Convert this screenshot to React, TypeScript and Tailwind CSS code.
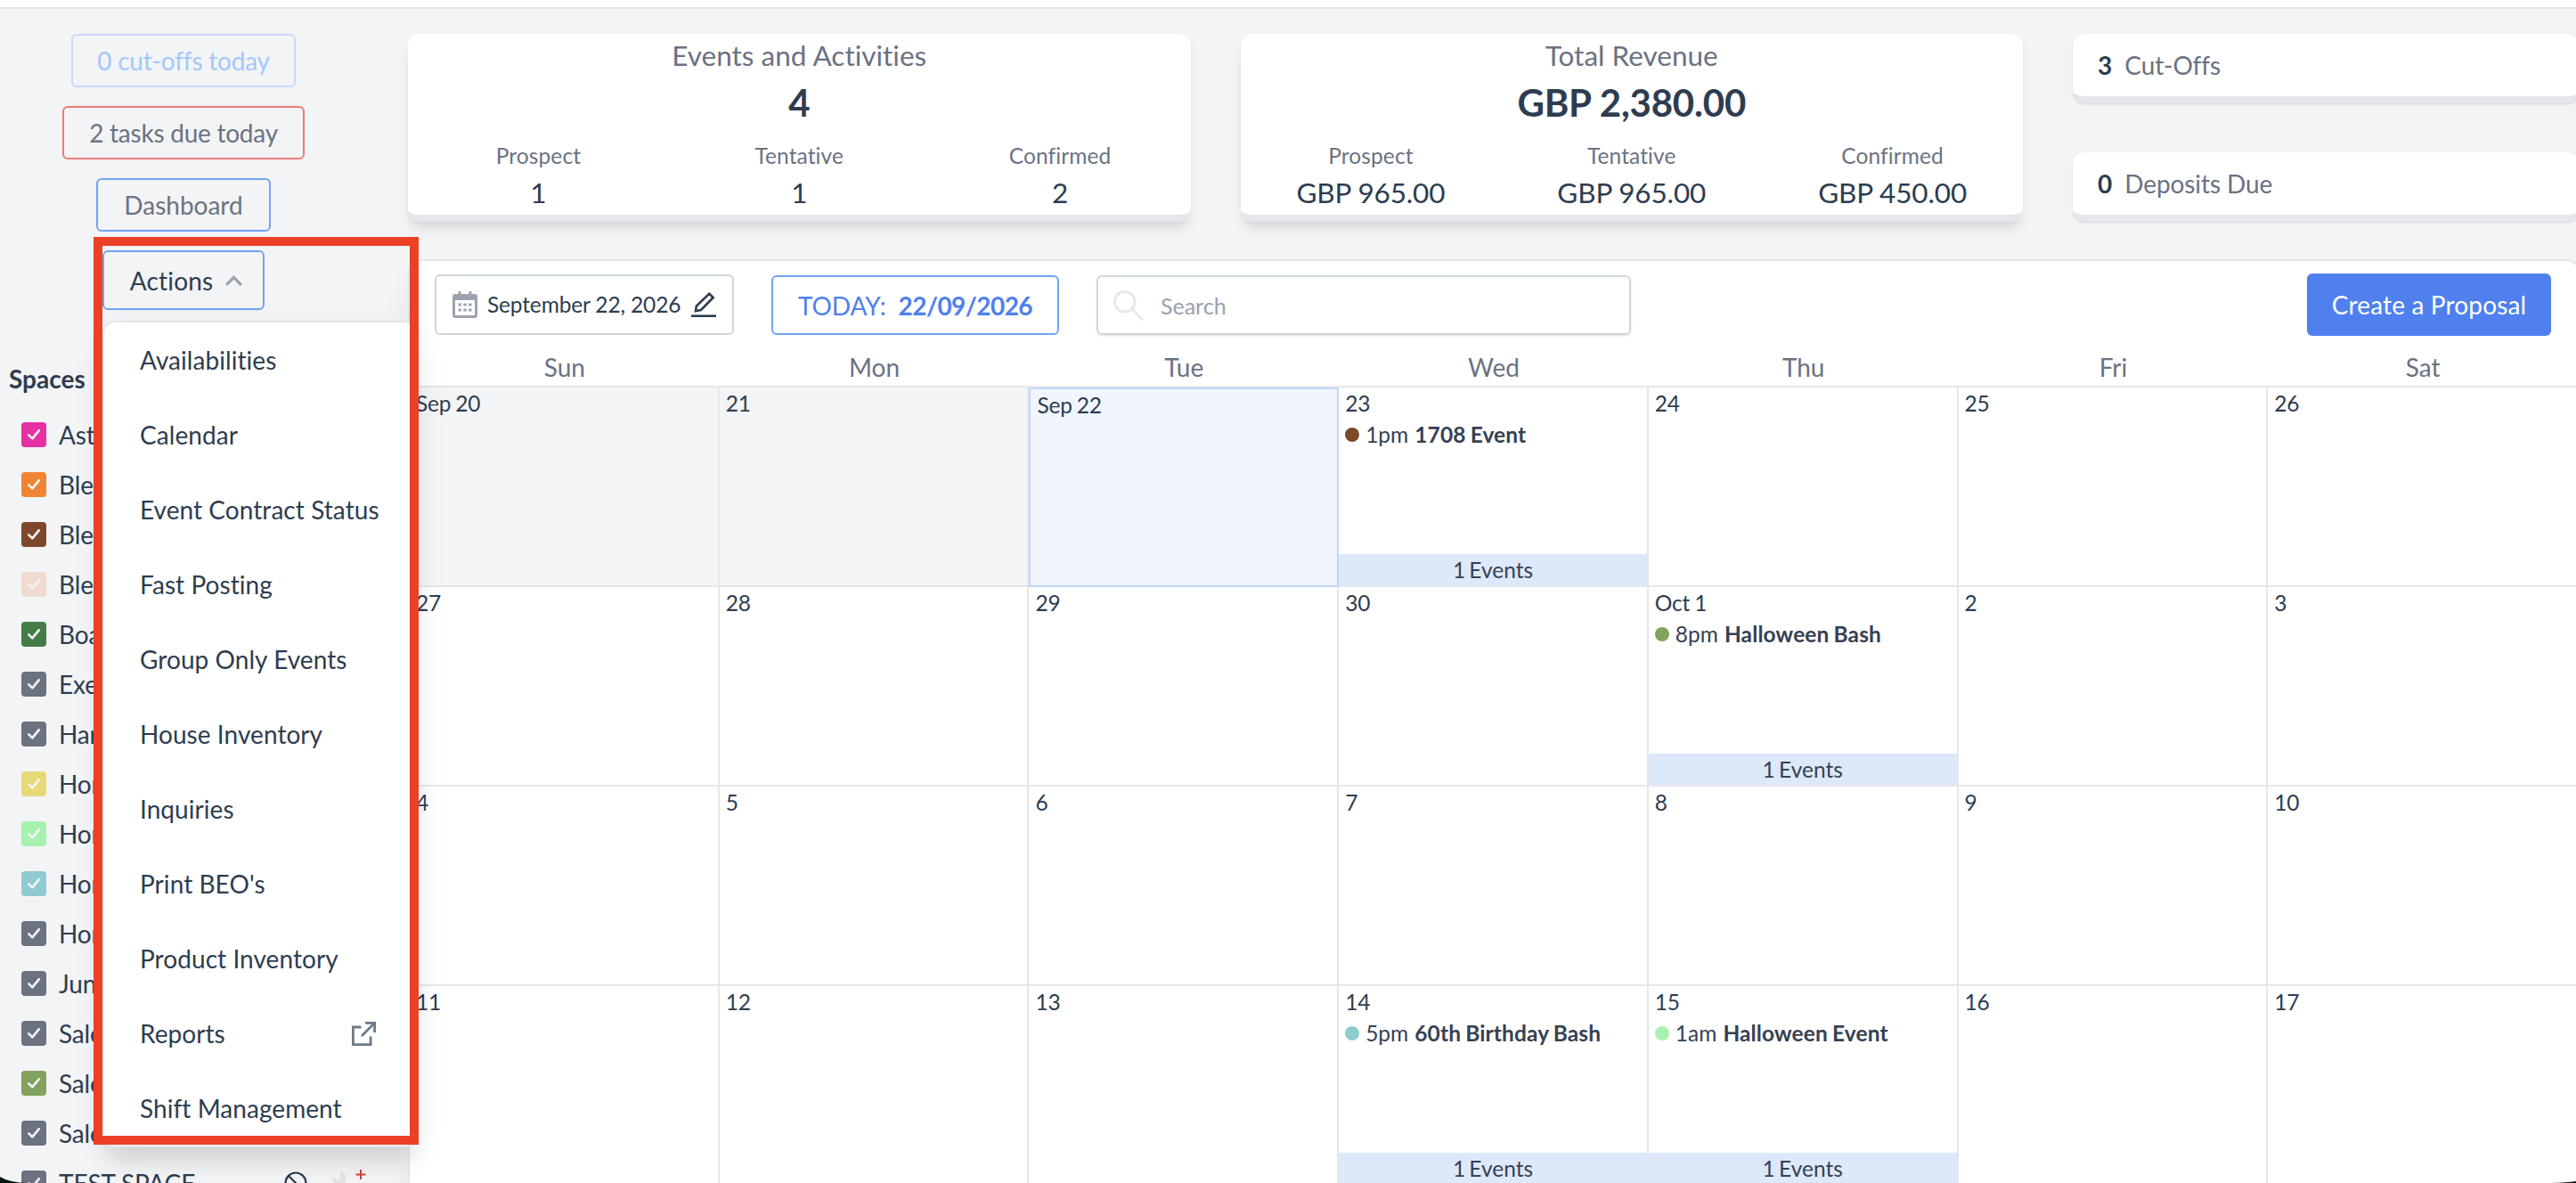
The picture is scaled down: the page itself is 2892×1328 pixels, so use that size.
const BUTTON = "flex items-center justify-center rounded-md border-2"

const SPACES = [
  { name: "Ast", color: "#e52fa2" },
  { name: "Ble", color: "#ef8534" },
  { name: "Ble", color: "#7d482a" },
  { name: "Ble", color: "#f1dad0" },
  { name: "Boa", color: "#437d45" },
  { name: "Exe", color: "#6b7280" },
  { name: "Har", color: "#6b7280" },
  { name: "Hor", color: "#e5da76" },
  { name: "Hor", color: "#a6f2ae" },
  { name: "Hor", color: "#8fcbcf" },
  { name: "Hor", color: "#6b7280" },
  { name: "Jun", color: "#6b7280" },
  { name: "Sale", color: "#6b7280" },
  { name: "Sale", color: "#83a25e" },
  { name: "Sale", color: "#6b7280" },
  { name: "TEST SPACE", color: "#6b7280" },
]

const ACTIONS = [
  "Availabilities",
  "Calendar",
  "Event Contract Status",
  "Fast Posting",
  "Group Only Events",
  "House Inventory",
  "Inquiries",
  "Print BEO's",
  "Product Inventory",
  "Reports",
  "Shift Management",
]

const WEEKDAYS = ["Sun", "Mon", "Tue", "Wed", "Thu", "Fri", "Sat"]

type Day = { label: string; state?: "past" | "today"; event?: { time: string; title: string; color: string } }

const DAYS: Day[] = [
  { label: "Sep 20", state: "past" },
  { label: "21", state: "past" },
  { label: "Sep 22", state: "today" },
  { label: "23", event: { time: "1pm", title: "1708 Event", color: "#7d482a" } },
  { label: "24" },
  { label: "25" },
  { label: "26" },
  { label: "27" },
  { label: "28" },
  { label: "29" },
  { label: "30" },
  { label: "Oct 1", event: { time: "8pm", title: "Halloween Bash", color: "#83a25e" } },
  { label: "2" },
  { label: "3" },
  { label: "4" },
  { label: "5" },
  { label: "6" },
  { label: "7" },
  { label: "8" },
  { label: "9" },
  { label: "10" },
  { label: "11" },
  { label: "12" },
  { label: "13" },
  { label: "14", event: { time: "5pm", title: "60th Birthday Bash", color: "#8fcbcf" } },
  { label: "15", event: { time: "1am", title: "Halloween Event", color: "#a6f2ae" } },
  { label: "16" },
  { label: "17" },
]

function CalendarIcon() {
  return (
    <svg className="w-7 h-[30px] shrink-0" viewBox="0 0 28 30" fill="none">
      <path d="M8 0v6M20 0v6" stroke="#9ca3af" strokeWidth="3" />
      <rect x="1.5" y="4.5" width="25" height="24" rx="1.5" stroke="#9ca3af" strokeWidth="3" />
      <path d="M1 4h26v6H1z" fill="#9ca3af" />
      <path d="M6.5 15h3.4M12.3 15h3.4M18.1 15h3.4M6.5 21h3.4M12.3 21h3.4M18.1 21h3.4" stroke="#9ca3af" strokeWidth="3.2" />
    </svg>
  )
}

function PencilIcon() {
  return (
    <svg className="w-7 h-7 shrink-0" viewBox="0 0 28 28" fill="none" stroke="#2d3d50">
      <path d="M20.2 1.8 24.7 6 11 20l-6 1.2L5.8 15.6z" strokeWidth="2.6" />
      <path d="M0 26.7h28" strokeWidth="2.6" />
    </svg>
  )
}

function ExternalIcon() {
  return (
    <svg className="w-[27px] h-[27px]" viewBox="0 0 27 27" fill="none" stroke="#6c7a86" strokeWidth="2.8">
      <path d="M10.5 6H1.4v19.6h19.7v-9.2" />
      <path d="M15 1.4h10.6V12M25.2 1.8 11 16" />
    </svg>
  )
}

function StatCard({ title, value, items }: { title: string; value: string; items: [string, string][] }) {
  return (
    <section className="w-[878.5px] h-[211px] shrink-0 rounded-[14px] border-b-8 border-[#e5e7eb] bg-white text-center shadow-[0_10px_15px_-3px_rgba(0,0,0,0.1),0_4px_6px_-2px_rgba(0,0,0,0.05)]">
      <h2 className="text-[31.5px] leading-[48px] text-gray-500">{title}</h2>
      <p className="text-[42px] leading-[58px] font-bold tracking-[-0.2px]">{value}</p>
      <div className="mt-3 grid grid-cols-3">
        {items.map(([label, amount]) => (
          <div key={label}>
            <p className="text-[24.5px] leading-[37px] tracking-[0.1px] text-gray-500">{label}</p>
            <p className="text-[31.5px] leading-[46px] tracking-[-0.14px]">{amount}</p>
          </div>
        ))}
      </div>
    </section>
  )
}

function CountCard({ count, label }: { count: number; label: string }) {
  return (
    <section className="flex h-[78px] items-center gap-[14px] rounded-[14px] border-b-8 border-[#e5e7eb] bg-white px-7 shadow-sm">
      <b>{count}</b>
      <span className="tracking-[-0.1px] text-gray-500">{label}</span>
    </section>
  )
}

function DayCell({ day }: { day: Day }) {
  const tone =
    day.state === "today"
      ? "border-2 border-[#bfd7fb] bg-[#f0f5ff]"
      : day.state === "past"
        ? "border-r-2 border-b-2 border-[#e5e7eb] bg-[#f3f4f6]"
        : "border-r-2 border-b-2 border-[#e5e7eb] bg-white"
  return (
    <div className={`flex h-56 flex-col text-[24.5px] ${tone}`}>
      <p className="px-[7px] leading-[35px] tracking-[-0.2px] [word-spacing:-1px]">{day.label}</p>
      {day.event && (
        <>
          <p className="flex items-center px-[7px] leading-[35px] text-gray-700">
            <span className="mr-[7px] size-4 rounded-full" style={{ background: day.event.color }} />
            {day.event.time}
            <b className="ml-[7px] tracking-[0.12px] [word-spacing:-1px]">{day.event.title}</b>
          </p>
          <p className="mt-auto bg-[#dde8fb] text-center leading-[35px] text-gray-700 [word-spacing:-2px]">1 Events</p>
        </>
      )}
    </div>
  )
}

function ActionsMenu() {
  return (
    <div className="relative">
      <button className={`${BUTTON} h-[67px] w-[182px] gap-[14px] border-[#6fa3f7] pl-[6px] tracking-[0.2px]`}>
        Actions
        <svg className="w-[19px] h-[12px]" viewBox="0 0 19 12" fill="none" stroke="#9ca3af" strokeWidth="3.2">
          <path d="m1.2 10.8 8.3-8.5 8.3 8.5" />
        </svg>
      </button>
      <ul className="absolute left-0 top-[79px] w-[353px] rounded-[14px] border-2 border-[#e5e7eb] bg-white tracking-[0.06px] shadow-[0_20px_25px_-5px_rgba(0,0,0,0.1),0_10px_40px_0_rgba(0,0,0,0.06)]">
        {ACTIONS.map((item) => (
          <li key={item} className="flex h-[84px] items-center justify-between pl-[40px] pr-11">
            <span className="whitespace-nowrap">{item}</span>
            {item === "Reports" && <ExternalIcon />}
          </li>
        ))}
      </ul>
      {/* highlight frame around the open menu */}
      <div className="absolute left-[-10px] top-[-15px] h-[1019px] w-[365px] border-10 border-[#ec4027]" />
    </div>
  )
}

function Sidebar() {
  return (
    <aside className="relative z-10 w-[458px] shrink-0 pt-7">
      <div className="flex w-[412px] flex-col items-center gap-[21px]">
        <button className={`${BUTTON} h-[60px] w-[252px] border-[#c3dafb] tracking-[-0.2px] text-[#a3c7fa]`}>0 cut-offs today</button>
        <button className={`${BUTTON} h-[60px] w-[272px] border-[#ec7b78] tracking-[-0.24px] text-gray-500`}>2 tasks due today</button>
        <button className={`${BUTTON} h-[60px] w-[196px] border-[#6fa3f7] text-gray-500`}>Dashboard</button>
        <ActionsMenu />
      </div>
      <h3 className="mt-14 pl-[10px] font-bold leading-[42px]">Spaces</h3>
      <ul className="relative -z-10 mt-[14px]">
        {SPACES.map((space, i) => (
          <li key={i} className="flex h-14 items-center gap-[14px] pl-6">
            <span className="grid size-7 place-items-center rounded" style={{ background: space.color }}>
              <svg className="w-[14px] h-3" viewBox="0 0 14 12" fill="none" stroke="#f3f4f6" strokeWidth="2.6" strokeLinecap="round" strokeLinejoin="round">
                <path d="m1.3 6.3 4 4L12.7 1.3" />
              </svg>
            </span>
            <span className="tracking-[-0.15px]">{space.name}</span>
            {space.name === "TEST SPACE" && (
              <span className="ml-[86px] flex gap-7">
                <svg className="size-[26px]" viewBox="0 0 26 26" fill="none" stroke="#2d3d50" strokeWidth="2.2">
                  <circle cx="13" cy="13" r="11.5" />
                  <path d="m5 5 16 16" />
                </svg>
                <svg className="h-[26px] w-[40px] overflow-visible" viewBox="0 0 40 26" fill="none">
                  <path d="M8 0a8 8 0 0 1 6 13L26 26h-8L8 15A8 8 0 0 1 0 6l5 4 5-3z" fill="#e0e2e6" />
                  <path d="M32-2v11M26.5 3.5h11" stroke="#d0413f" strokeWidth="2" />
                </svg>
              </span>
            )}
          </li>
        ))}
      </ul>
    </aside>
  )
}

function Toolbar() {
  return (
    <div className="flex h-[98px] items-center pl-7 pr-[30px]">
      <div className={`${BUTTON} h-[68px] w-[336px] justify-start border-gray-300 px-[18px] text-[24.5px]`}>
        <CalendarIcon />
        <span className="ml-[11px] mr-3 whitespace-nowrap tracking-[-0.15px]">September 22, 2026</span>
        <PencilIcon />
      </div>
      <div className={`${BUTTON} ml-[42px] mt-px h-[67px] w-[323px] gap-[14px] border-[#6fa3f7] text-[#4f80ee]`}>
        <span className="tracking-[-0.1px]">TODAY:</span>
        <b className="tracking-[-0.55px]">22/09/2026</b>
      </div>
      <div className={`${BUTTON} ml-[42px] mt-px h-[67px] w-[600px] justify-start gap-[19px] border-gray-300 px-[17px] text-[25px] text-gray-400 shadow-sm`}>
        <svg className="size-[34px]" viewBox="0 0 34 34" fill="none" stroke="#e5e7eb" strokeWidth="3">
          <circle cx="12.8" cy="12.8" r="11.3" />
          <path d="M20.8 20.8 33 33" />
        </svg>
        Search
      </div>
      <button className="ml-auto h-[70px] w-[274px] rounded-md bg-[#4f80ee] tracking-[0.15px] text-white">Create a Proposal</button>
    </div>
  )
}

export default function App() {
  return (
    <div className="relative h-[1328px] w-[2892px] overflow-hidden bg-[#f3f4f6] font-['Lato',sans-serif] text-[28px] leading-[42px] text-[#2d3d50] [font-variant-ligatures:none]">
      <div className="h-[10px] border-b-2 border-[#e5e5e5] bg-white" />
      <div className="flex">
        <Sidebar />
        <main className="w-[2438px] shrink-0 pt-7">
          <div className="flex gap-14">
            <StatCard
              title="Events and Activities"
              value="4"
              items={[["Prospect", "1"], ["Tentative", "1"], ["Confirmed", "2"]]}
            />
            <StatCard
              title="Total Revenue"
              value="GBP 2,380.00"
              items={[["Prospect", "GBP 965.00"], ["Tentative", "GBP 965.00"], ["Confirmed", "GBP 450.00"]]}
            />
            <div className="flex flex-1 flex-col justify-between">
              <CountCard count={3} label="Cut-Offs" />
              <CountCard count={0} label="Deposits Due" />
            </div>
          </div>
          <section className="mt-[42px] rounded-[14px] border-2 border-[#e5e7eb] bg-white shadow-[0_20px_30px_0_rgba(0,0,0,0.06)]">
            <Toolbar />
            <div className="grid grid-cols-7 border-b-2 border-[#e5e7eb] text-center text-gray-500">
              {WEEKDAYS.map((name) => (
                <span key={name}>{name}</span>
              ))}
            </div>
            <div className="grid grid-cols-7">
              {DAYS.map((day) => (
                <DayCell key={day.label} day={day} />
              ))}
            </div>
          </section>
        </main>
      </div>
      {/* rounded window corners */}
      <svg className="absolute bottom-0 left-0 z-20 h-[7px] w-8" viewBox="0 0 32 7">
        <path d="M0 0Q10 6.5 32 7H0z" fill="#07150f" />
      </svg>
      <svg className="absolute right-0 bottom-0 z-20 h-[2px] w-7" viewBox="0 0 28 2">
        <path d="M28 0Q18 1.5 0 2h28z" fill="#07150f" />
      </svg>
    </div>
  )
}
